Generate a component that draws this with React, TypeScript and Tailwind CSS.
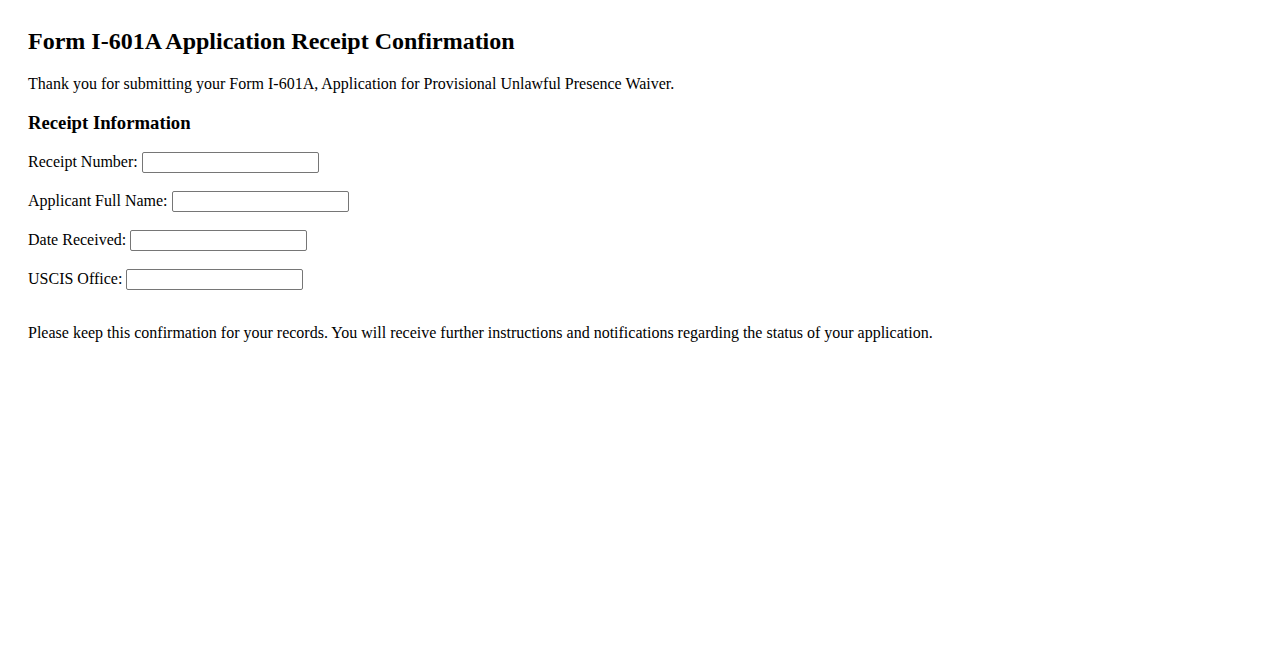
const rows = [
  { label: "Receipt Number:" },
  { label: "Applicant Full Name:" },
  { label: "Date Received:" },
  { label: "USCIS Office:" },
];

export default function App() {
  return (
    <div className="min-h-screen bg-white pl-[28px] pt-[27px] text-black [font-family:'Liberation_Serif','Times_New_Roman',serif]">
      <h1 className="mb-[20px] text-[24px] font-bold leading-[28px]">
        Form I-601A Application Receipt Confirmation
      </h1>
      <p className="mb-[19px] text-[16px] leading-[18px]">
        Thank you for submitting your Form I-601A, Application for Provisional Unlawful Presence Waiver.
      </p>
      <h2 className="mb-[17px] text-[18.72px] font-bold leading-[22px]">Receipt Information</h2>
      <div className="mb-[33px] flex flex-col gap-4">
        {rows.map((row) => (
          <div key={row.label} className="flex h-[23px] items-center gap-[4px] text-[16px]">
            <span className="-mt-px">{row.label}</span>
            <input
              type="text"
              className="h-[21px] w-[177px] rounded-[2px] border border-[#767676] bg-white px-[2px] text-[13px] outline-none"
            />
          </div>
        ))}
      </div>
      <p className="text-[16px] leading-[18px]">
        Please keep this confirmation for your records. You will receive further instructions and notifications
        regarding the status of your application.
      </p>
    </div>
  );
}
